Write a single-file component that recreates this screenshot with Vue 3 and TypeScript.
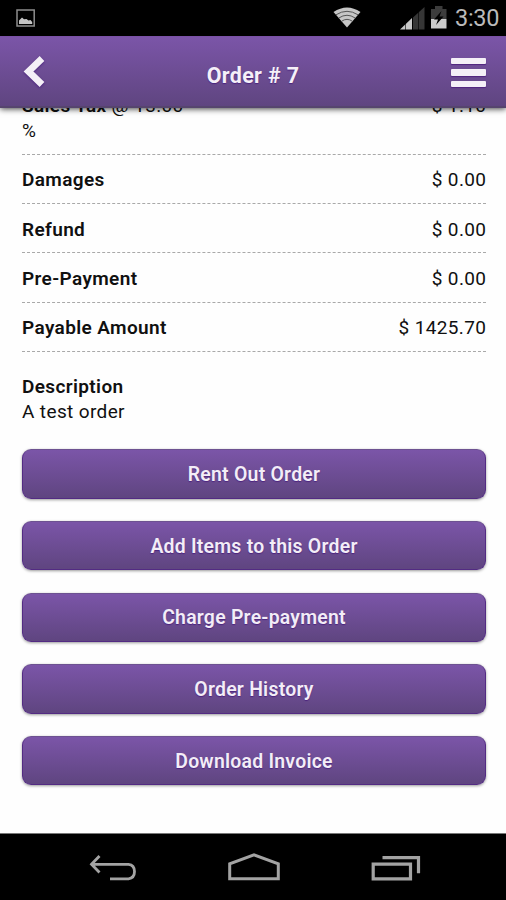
<script setup lang="ts">
interface Charge {
  label: string
  detail?: string
  amount: string
}

const charges: Charge[] = [
  { label: 'Sales Tax', detail: '@ 13.00 %', amount: '$ 1.10' },
  { label: 'Damages', amount: '$ 0.00' },
  { label: 'Refund', amount: '$ 0.00' },
  { label: 'Pre-Payment', amount: '$ 0.00' },
  { label: 'Payable Amount', amount: '$ 1425.70' },
]

const actions: string[] = [
  'Rent Out Order',
  'Add Items to this Order',
  'Charge Pre-payment',
  'Order History',
  'Download Invoice',
]
</script>

<template>
  <div class="screen">
    <div class="status-bar">
      <svg class="picture-icon" viewBox="0 0 20 19" width="20" height="19">
        <rect x="1" y="1" width="17.2" height="16" fill="none" stroke="#8d8d8d" stroke-width="1.5" />
        <path d="M3 15V11.5L4.500 10 6 8.500l2 1.800 2.500-.3 2 1.500 2-.5 1.700 2V15z" fill="#c4c4c4" />
      </svg>
      <div class="indicators">
        <svg class="wifi-icon" viewBox="0 0 28 21" width="28" height="21">
          <path d="M.5 5Q14-4 27.500 5L14 20.500z" fill="#c6c6c6" />
          <path d="M3 7.800Q14 .8 25 7.800M5.800 11Q14 5.500 22.200 11M8.700 14.200Q14 10.500 19.300 14.200" fill="none" stroke="#555" stroke-width="1" />
        </svg>
        <svg class="signal-icon" viewBox="0 0 26 23" width="26" height="23">
          <path d="M0 22.500L12 11V22.500z" fill="#c8c8c8" />
          <path d="M13 10.500L24.500 0V22.500H13z" fill="#363636" />
          <path d="M5.500 16V23M12.500 10V23M18.500 5V23" stroke="#000" stroke-opacity=".6" stroke-width="1" />
        </svg>
        <svg class="battery-icon" viewBox="0 0 16 23" width="16" height="23">
          <path d="M0 3H4V0H11.500V3H15.500V13H0z" fill="#3c3c3c" />
          <path d="M0 13H15.500V22.500H0z" fill="#cbcbcb" />
          <path d="M10.500 5L3 13.500H7L5 19 12.500 10.500H8.500z" fill="#000" />
        </svg>
        <span class="clock">3:30</span>
      </div>
    </div>

    <header class="header">
      <button class="icon-button back" aria-label="Back">
        <svg viewBox="0 0 24 34" width="24" height="34">
          <path d="M20 3.500L6.500 16.500 20 29.500" fill="none" stroke="#f4f0f7" stroke-width="6.800" />
        </svg>
      </button>
      <h1 class="title">Order # 7</h1>
      <button class="icon-button menu" aria-label="Menu">
        <span class="bar"></span>
        <span class="bar"></span>
        <span class="bar"></span>
      </button>
    </header>

    <main class="content">
      <dl class="charges">
        <div v-for="charge in charges" :key="charge.label" class="charge">
          <dt><b>{{ charge.label }}</b>{{ charge.detail ? ' ' + charge.detail : '' }}</dt>
          <dd>{{ charge.amount }}</dd>
        </div>
      </dl>

      <section class="description">
        <h2>Description</h2>
        <p>A test order</p>
      </section>

      <div class="actions">
        <button v-for="action in actions" :key="action" class="action">{{ action }}</button>
      </div>
    </main>

    <nav class="nav-bar">
      <svg viewBox="0 0 50 30" width="50" height="30">
        <path d="M12.500 3L4.500 11.300 12.500 19.500M5 11.300H41.500Q47.500 12 47.500 18.500T41.500 25.800H23" fill="none" stroke="#a3a3a3" stroke-width="2.800" />
      </svg>
      <svg viewBox="0 0 56 30" width="56" height="30">
        <path d="M3.700 25.800V10.800L28 1.800 52.300 10.800V25.800z" fill="none" stroke="#a3a3a3" stroke-width="3" />
      </svg>
      <svg viewBox="0 0 50 30" width="50" height="30">
        <path d="M2.200 11.200H39.500V25.800H2.200zM11.500 4.600H47.500V20.300" fill="none" stroke="#a3a3a3" stroke-width="3.200" />
      </svg>
    </nav>
  </div>
</template>

<style>
body {
  margin: 0;
}
</style>

<style scoped>
.screen {
  width: 506px;
  height: 900px;
  display: flex;
  flex-direction: column;
  overflow: hidden;
  background: #fefefe;
  color: #101010;
  font-family: Roboto, "Liberation Sans", sans-serif;
  font-size: 19px;
  letter-spacing: 0.370px;
  line-height: 25.5px;
}

.status-bar {
  flex: none;
  box-sizing: border-box;
  height: 36px;
  padding: 0 8px 0 16px;
  display: flex;
  justify-content: space-between;
  align-items: center;
  background: #000;
}

.indicators {
  display: flex;
  align-items: center;
}

.wifi-icon {
  margin: 0 39px 2px 0;
}

.signal-icon {
  margin-right: 5px;
}

.battery-icon {
  margin: 0 8px 2px 0;
}

.clock {
  width: 43px;
  padding-top: 2px;
  color: #bababa;
  font-size: 23.5px;
  letter-spacing: -0.3px;
  white-space: nowrap;
}

.header {
  flex: none;
  position: relative;
  z-index: 1;
  box-sizing: border-box;
  height: 72px;
  padding: 0 20px 0 22px;
  display: grid;
  grid-template-columns: 35px 1fr 35px;
  align-items: center;
  border-top: 1px solid #7950a5;
  border-bottom: 2px solid #56456e;
  background: linear-gradient(#7b55a8, #5f4580);
  box-shadow: 0 1px 6px rgba(0, 0, 0, 0.75);
}

.title {
  margin: 9px 2px 0 0;
  color: #f5f0f8;
  font-size: 21.400px;
  font-weight: 700;
  text-align: center;
  text-shadow: 0 1px 1px #4c247e;
}

.icon-button {
  margin: 0;
  padding: 0;
  border: 0;
  background: none;
}

.back {
  height: 34px;
  filter: drop-shadow(0 1px 1px #4c247e);
  text-align: left;
}

.back svg {
  display: block;
}

.menu {
  display: flex;
  flex-direction: column;
  gap: 5px;
  margin-top: 2px;
}

.bar {
  height: 6.500px;
  border-radius: 1px;
  background: #f4f0f7;
  box-shadow: 0 1px 1px #50257f;
}

.content {
  flex: 1;
  min-height: 0;
  padding: 0 20px 0 22px;
}

.charges {
  margin: -27.600px 0 0;
}

.charge {
  display: flex;
  justify-content: space-between;
  padding: 12.300px 0 10.400px;
  border-bottom: 1px dashed #a9a9a9;
}

dt {
  max-width: 172px;
}

dt b {
  font-weight: 600;
}

dd {
  margin: 0 -0.370px 0 0;
}

.description {
  padding-top: 22px;
}

.description h2 {
  margin: 0;
  font-size: inherit;
  font-weight: 600;
}

.description p {
  margin: 0;
}

.actions {
  display: flex;
  flex-direction: column;
  gap: 22.200px;
  margin-top: 24.300px;
}

.action {
  box-sizing: border-box;
  height: 49.500px;
  padding: 1px 0 0;
  border: 1px solid #532b83;
  border-top-color: #6d5291;
  border-radius: 9px;
  background: linear-gradient(#7b55a8, #5f4580);
  box-shadow: 0 1px 3px rgba(0, 0, 0, 0.4);
  color: #f3edf7;
  font: 600 19.400px/25px Roboto, "Liberation Sans", sans-serif;
  letter-spacing: 0.250px;
  text-shadow: 0 1px 1px #4c247e;
}

.nav-bar {
  flex: none;
  box-sizing: border-box;
  height: 67px;
  padding: 2px 85px 0 87px;
  display: flex;
  justify-content: space-between;
  align-items: center;
  border-top: 1px solid #777;
  background: #000;
}
</style>
